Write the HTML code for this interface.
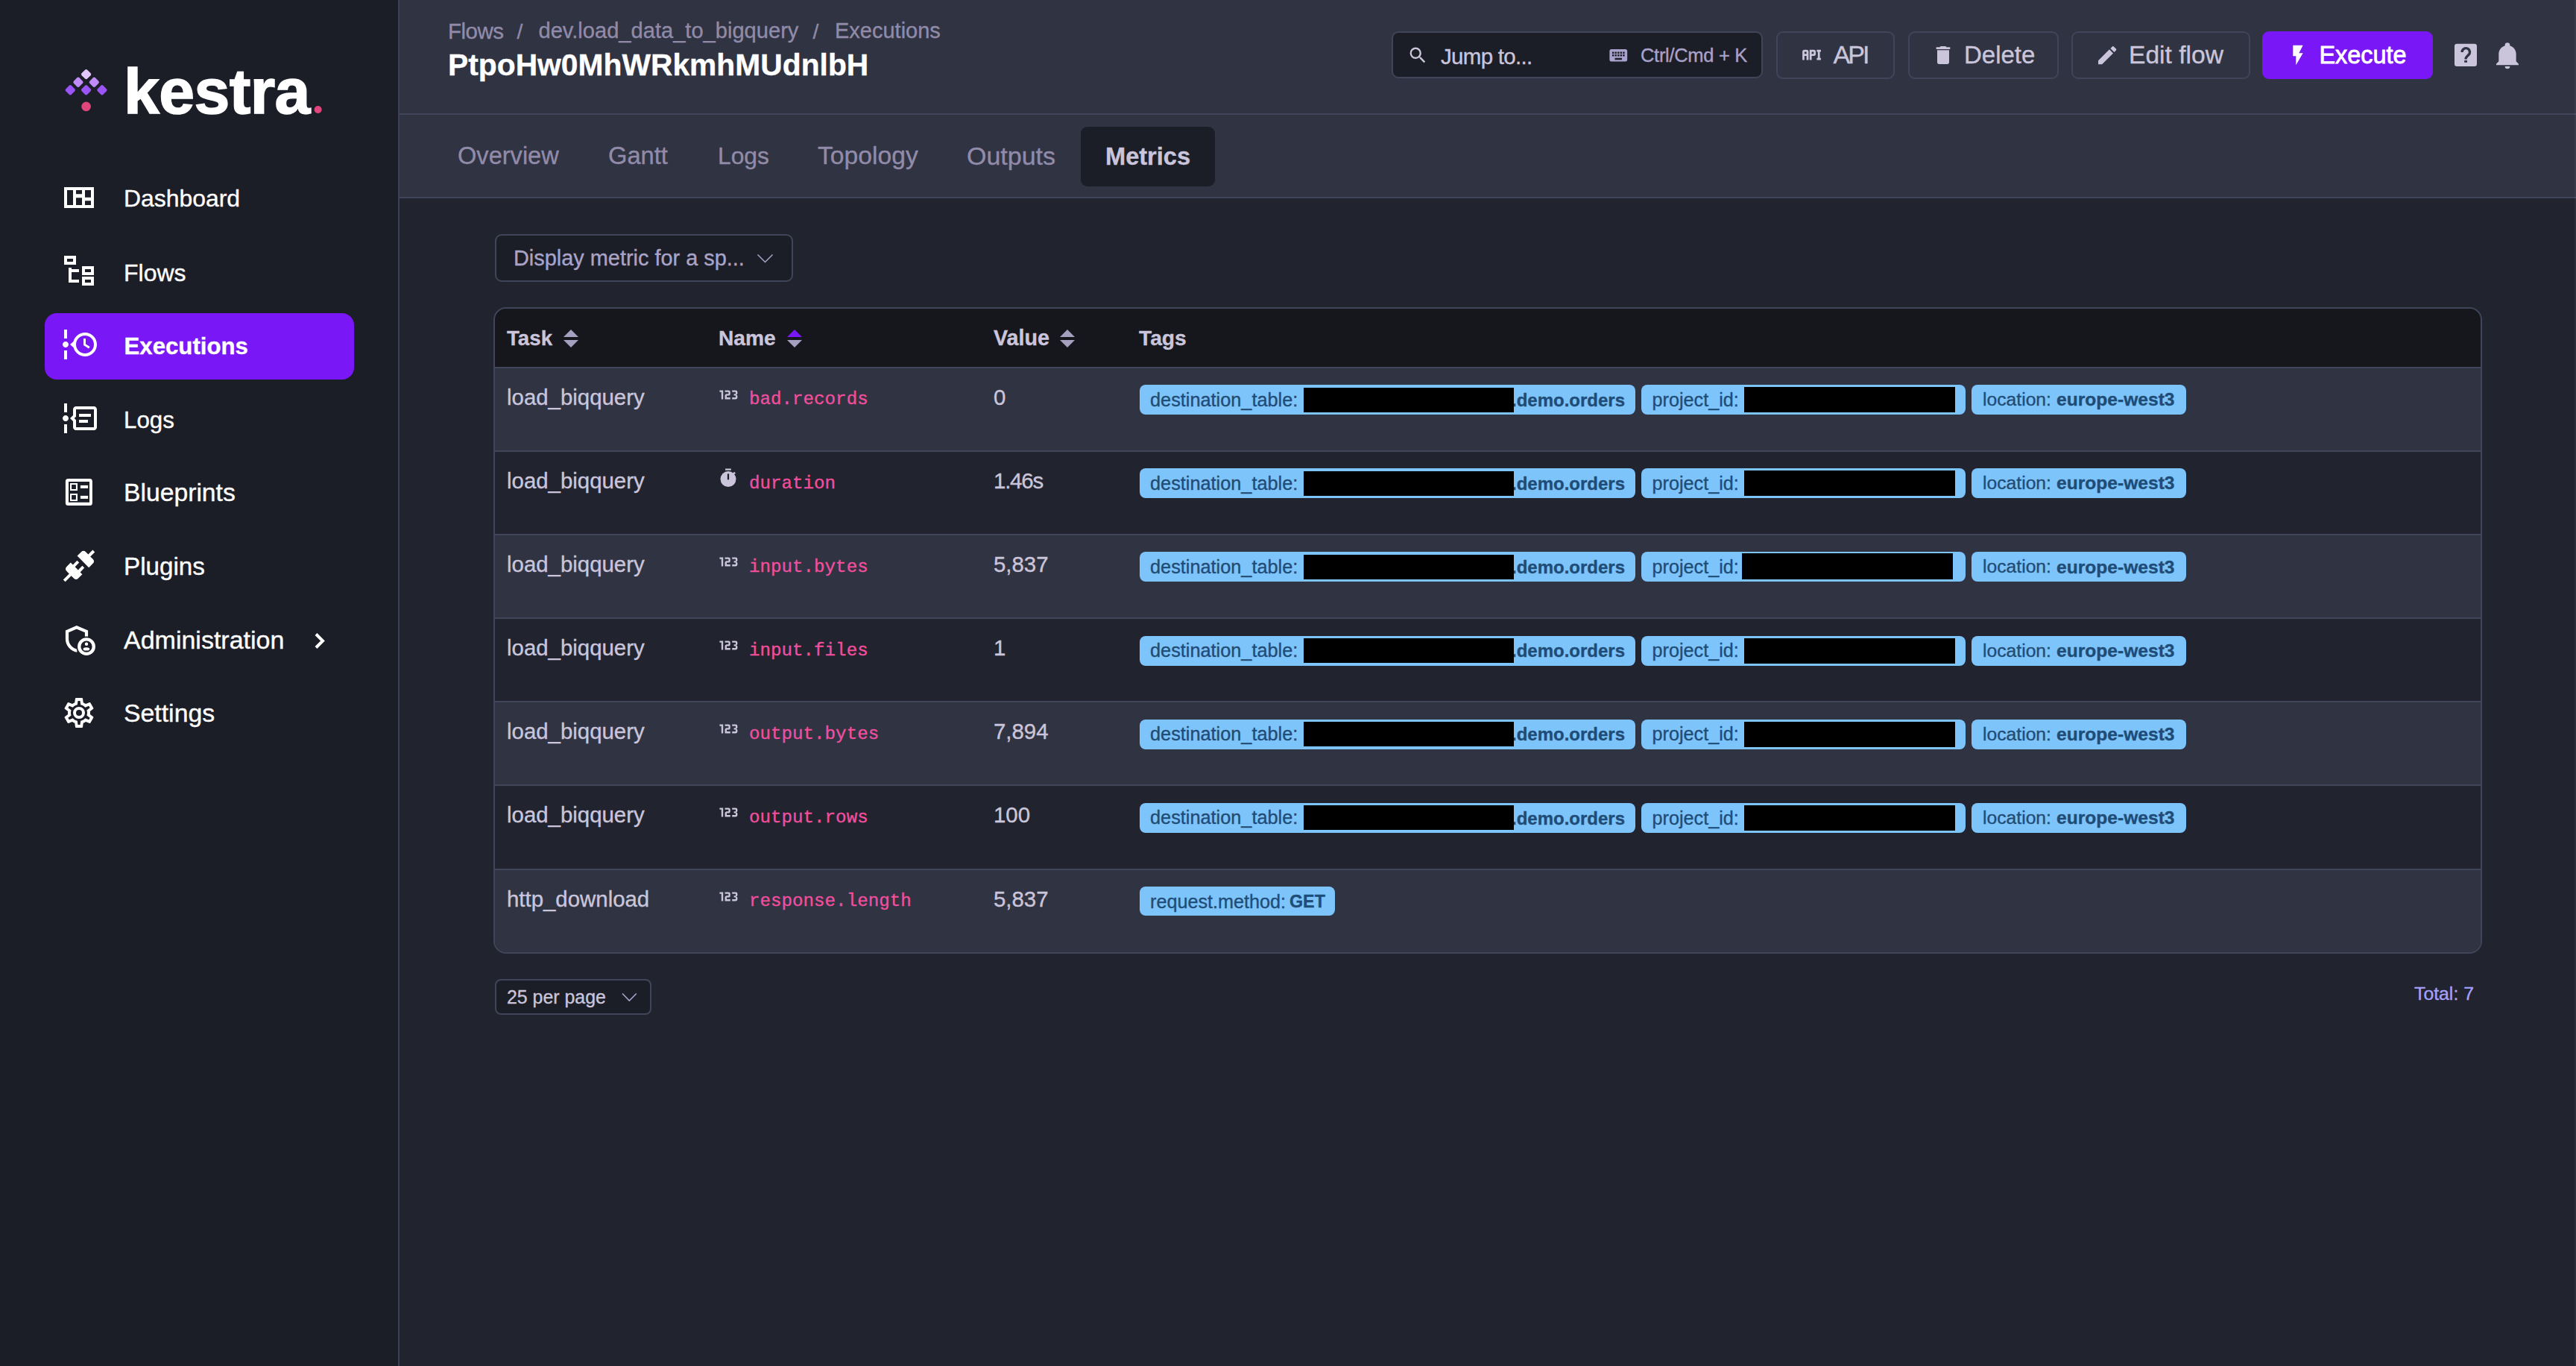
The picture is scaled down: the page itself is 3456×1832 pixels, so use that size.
<!DOCTYPE html>
<html><head><meta charset="utf-8">
<style>
*{box-sizing:border-box;margin:0;padding:0}
html,body{width:3456px;height:1832px;overflow:hidden;background:#21242E;font-family:"Liberation Sans",sans-serif;position:relative}
.a{position:absolute;white-space:pre;line-height:1;-webkit-text-stroke:0.35px currentColor}
.mono{font-family:"Liberation Mono",monospace}
@media (max-width:2000px){html{zoom:0.5}}
</style></head><body>
<div style="position:absolute;left:0px;top:0px;width:534px;height:1832px;background:#1C1E27"></div>
<div style="position:absolute;left:534px;top:0px;width:2px;height:1832px;background:#3C4153"></div>
<div style="position:absolute;left:536px;top:0px;width:2920px;height:264px;background:#2F3342"></div>
<div style="position:absolute;left:536px;top:152px;width:2920px;height:2px;background:#404559"></div>
<div style="position:absolute;left:536px;top:264px;width:2920px;height:2px;background:#404559"></div>
<svg style="position:absolute;left:0px;top:0px;" width="540" height="200" viewBox="0 0 540 200"><rect x="110.3" y="94.3" width="10.6" height="10.6" rx="2.2" fill="#E3C6FF" transform="rotate(45 115.6 99.6)"/><rect x="99.60000000000001" y="105.0" width="10.6" height="10.6" rx="2.2" fill="#C08CF8" transform="rotate(45 104.9 110.3)"/><rect x="121.0" y="105.0" width="10.6" height="10.6" rx="2.2" fill="#C08CF8" transform="rotate(45 126.3 110.3)"/><rect x="89.0" y="115.5" width="10.6" height="10.6" rx="2.2" fill="#9B55F7" transform="rotate(45 94.3 120.8)"/><rect x="110.3" y="115.5" width="10.6" height="10.6" rx="2.2" fill="#9B55F7" transform="rotate(45 115.6 120.8)"/><rect x="131.6" y="115.5" width="10.6" height="10.6" rx="2.2" fill="#9B55F7" transform="rotate(45 136.9 120.8)"/><circle cx="115.6" cy="142.9" r="6.3" fill="#E0457B"/><circle cx="426.6" cy="147" r="5" fill="#E0457B"/></svg>
<div class="a " style="left:166px;top:79.20px;font-size:86px;color:#fff;font-weight:700;letter-spacing:-0.6px;-webkit-text-stroke:1.6px #fff">kestra</div>
<div style="position:absolute;left:60px;top:420px;width:415px;height:89px;background:#7A17F6;border-radius:16px"></div>
<div class="a " style="left:166px;top:251.40px;font-size:31.9px;color:#fff">Dashboard</div>
<div class="a " style="left:166px;top:349.91px;font-size:32px;color:#fff">Flows</div>
<div class="a " style="left:166.5px;top:449.19px;font-size:31.2px;color:#fff;font-weight:700">Executions</div>
<div class="a " style="left:166px;top:547.70px;font-size:31.3px;color:#fff">Logs</div>
<div class="a " style="left:166px;top:644.27px;font-size:33.7px;color:#fff">Blueprints</div>
<div class="a " style="left:166px;top:743.30px;font-size:33.2px;color:#fff">Plugins</div>
<div class="a " style="left:166px;top:841.22px;font-size:34px;color:#fff">Administration</div>
<div class="a " style="left:166px;top:939.99px;font-size:33.8px;color:#fff">Settings</div>
<svg style="position:absolute;left:0px;top:0px;" width="540" height="1000" viewBox="0 0 540 1000"><path fill-rule="evenodd" fill="#fff" d="M86 251H126V279H86ZM90 255H98V275H90Z M102 255H110V260.2H102Z M102 265.2H110V275H102ZM114 255H122V264.7H114Z M114 269.3H122V275H114Z"/></svg>
<svg style="position:absolute;left:81.8px;top:338.7px" width="48.00" height="48.00" viewBox="0 0 24 24"><path fill="#fff" d="M12 13H7V18H12V20H5V10H7V11H12V13M8 4V6H4V4H8M10 2H2V8H10V2M20 11V13H16V11H20M22 9H14V15H22V9M20 18V20H16V18H20M22 16H14V22H22V16Z" /></svg>
<svg style="position:absolute;left:81.9px;top:438px" width="48.00" height="48.00" viewBox="0 0 24 24"><path fill="#fff" d="M4 2V8H2V2H4M2 22V16H4V22H2M5 12C5 13.11 4.11 14 3 14C1.9 14 1 13.11 1 12C1 10.9 1.9 10 3 10C4.11 10 5 10.9 5 12M16 4C20.42 4 24 7.58 24 12C24 16.42 20.42 20 16 20C12.28 20 9.15 17.46 8.26 14L6 12L8.26 10C9.15 6.54 12.28 4 16 4M16 6C12.69 6 10 8.69 10 12C10 15.31 12.69 18 16 18C19.31 18 22 15.31 22 12C22 8.69 19.31 6 16 6M15 8H16.5V11.75L19.33 13.5L18.5 14.69L15 12.5V8Z" /></svg>
<svg style="position:absolute;left:81.9px;top:536.8px" width="48.00" height="48.00" viewBox="0 0 24 24"><path fill="#fff" d="M4 2V8H2V2H4M2 22V16H4V22H2M5 12C5 13.11 4.11 14 3 14C1.9 14 1 13.11 1 12C1 10.9 1.9 10 3 10C4.11 10 5 10.9 5 12M24 6V18C24 19.11 23.11 20 22 20H10C8.9 20 8 19.11 8 18V14L6 12L8 10V6C8 4.89 8.9 4 10 4H22C23.11 4 24 4.89 24 6M22 6H10V10.83L8.83 12L10 13.17V18H22V6M12 9H20V11H12V9M12 13H18V15H12V13Z" /></svg>
<svg style="position:absolute;left:0px;top:0px;" width="540" height="1000" viewBox="0 0 540 1000"><path fill-rule="evenodd" fill="#fff" d="M91.4 641.9H120.4A3.5 3.5 0 0 1 123.9 645.4V674.5A3.5 3.5 0 0 1 120.4 678H91.4A3.5 3.5 0 0 1 87.9 674.5V645.4A3.5 3.5 0 0 1 91.4 641.9ZM92 646H120V673.8H92Z"/><path fill-rule="evenodd" fill="#fff" d="M94 648H104V658H94Z M96.1 650.1H101.9V655.9H96.1Z"/><path fill-rule="evenodd" fill="#fff" d="M94 662H104V672H94Z M96.1 664.1H101.9V669.9H96.1Z"/><rect x="107.9" y="650.9" width="10.2" height="4" fill="#fff"/><rect x="107.9" y="664.9" width="10.2" height="4" fill="#fff"/></svg>
<svg style="position:absolute;left:81.6px;top:735px" width="48.00" height="48.00" viewBox="0 0 24 24"><path fill="#fff" d="M21.4 7.5C22.2 8.3 22.2 9.6 21.4 10.3L18.6 13.1L10.8 5.3L13.6 2.5C14.4 1.7 15.7 1.7 16.4 2.5L18.2 4.3L21.2 1.3L22.6 2.7L19.6 5.7L21.4 7.5M15.6 13.3L14.2 11.9L11.4 14.7L9.3 12.6L12.1 9.8L10.7 8.4L7.9 11.2L6.4 9.8L3.6 12.6C2.8 13.4 2.8 14.7 3.6 15.4L5.4 17.2L1.4 21.2L2.8 22.6L6.8 18.6L8.6 20.4C9.4 21.2 10.7 21.2 11.4 20.4L14.2 17.6L12.8 16.2L15.6 13.3Z" /></svg>
<svg style="position:absolute;left:0px;top:0px;" width="540" height="1000" viewBox="0 0 540 1000"><path d="M103.6 872.7C95.5 871 90 864.5 90 857V846.8L102.8 841.3L116 846.8V857" fill="none" stroke="#fff" stroke-width="4.2" stroke-linejoin="miter"/><circle cx="116" cy="867.2" r="13.6" fill="#1C1E27"/><circle cx="116" cy="867.2" r="9.75" fill="none" stroke="#fff" stroke-width="4.3"/><circle cx="116" cy="863.8" r="2.2" fill="#fff"/><ellipse cx="115.9" cy="870.4" rx="4.3" ry="2.2" fill="#fff"/></svg>
<svg style="position:absolute;left:81.9px;top:931.9px" width="48.00" height="48.00" viewBox="0 0 24 24"><path fill="#fff" d="M12,8A4,4 0 0,1 16,12A4,4 0 0,1 12,16A4,4 0 0,1 8,12A4,4 0 0,1 12,8M12,10A2,2 0 0,0 10,12A2,2 0 0,0 12,14A2,2 0 0,0 14,12A2,2 0 0,0 12,10M10,22C9.75,22 9.54,21.82 9.5,21.58L9.13,18.93C8.5,18.68 7.96,18.34 7.44,17.94L4.95,18.95C4.73,19.03 4.46,18.95 4.34,18.73L2.34,15.27C2.21,15.05 2.27,14.78 2.46,14.63L4.57,12.97L4.5,12L4.57,11L2.46,9.37C2.27,9.22 2.21,8.95 2.34,8.73L4.34,5.27C4.46,5.05 4.73,4.96 4.95,5.05L7.44,6.05C7.96,5.66 8.5,5.32 9.13,5.07L9.5,2.42C9.54,2.18 9.75,2 10,2H14C14.25,2 14.46,2.18 14.5,2.42L14.87,5.07C15.5,5.32 16.04,5.66 16.56,6.05L19.05,5.05C19.27,4.96 19.54,5.05 19.66,5.27L21.66,8.73C21.79,8.95 21.73,9.22 21.54,9.37L19.43,11L19.5,12L19.43,13L21.54,14.63C21.73,14.78 21.79,15.05 21.66,15.27L19.66,18.73C19.54,18.95 19.27,19.04 19.05,18.95L16.56,17.95C16.04,18.34 15.5,18.68 14.87,18.93L14.5,21.58C14.46,21.82 14.25,22 14,22H10M11.25,4L10.88,6.61C9.68,6.86 8.62,7.5 7.85,8.39L5.44,7.35L4.69,8.65L6.8,10.2C6.4,11.37 6.4,12.64 6.8,13.8L4.68,15.36L5.43,16.66L7.86,15.62C8.63,16.5 9.68,17.14 10.87,17.38L11.24,20H12.76L13.13,17.39C14.32,17.14 15.37,16.5 16.14,15.62L18.57,16.66L19.32,15.36L17.2,13.81C17.6,12.64 17.6,11.37 17.2,10.2L19.31,8.65L18.56,7.35L16.15,8.39C15.38,7.5 14.32,6.86 13.12,6.62L12.75,4H11.25Z" /></svg>
<svg style="position:absolute;left:415px;top:840px;" width="30" height="40" viewBox="0 0 30 40"><path d="M9 10.5L18 19.5L9 28.5" fill="none" stroke="#fff" stroke-width="4" stroke-linecap="butt" stroke-linejoin="miter"/></svg>
<div class="a " style="left:601px;top:27.03px;font-size:29.5px;color:#918BA9;letter-spacing:-0.5px">Flows</div>
<div class="a " style="left:693.5px;top:28.04px;font-size:28.3px;color:#918BA9">/</div>
<div class="a " style="left:722.5px;top:27.37px;font-size:29.1px;color:#918BA9">dev.load_data_to_bigquery</div>
<div class="a " style="left:1090.5px;top:28.04px;font-size:28.3px;color:#918BA9">/</div>
<div class="a " style="left:1120px;top:27.45px;font-size:29px;color:#918BA9">Executions</div>
<div class="a " style="left:601px;top:67.46px;font-size:40.8px;color:#fff;font-weight:700">PtpoHw0MhWRkmhMUdnlbH</div>
<div style="position:absolute;left:1450px;top:170px;width:180px;height:80px;background:#1C1E27;border-radius:9px"></div>
<div class="a " style="left:614px;top:193.40px;font-size:32.6px;color:#918BA9">Overview</div>
<div class="a " style="left:816px;top:193.32px;font-size:32.7px;color:#918BA9">Gantt</div>
<div class="a " style="left:963px;top:194.08px;font-size:31.8px;color:#918BA9">Logs</div>
<div class="a " style="left:1097px;top:192.47px;font-size:33.7px;color:#918BA9">Topology</div>
<div class="a " style="left:1297px;top:192.22px;font-size:34px;color:#918BA9">Outputs</div>
<div class="a " style="left:1483px;top:193.90px;font-size:32.6px;color:#CAC5DA;font-weight:700">Metrics</div>
<div style="position:absolute;left:1866.5px;top:42px;width:498.5px;height:63px;background:#1C1E27;border:2px solid #404559;border-radius:9px"></div>
<svg style="position:absolute;left:1887.8px;top:59.8px" width="28.32" height="28.32" viewBox="0 0 24 24"><path fill="#CAC5DA" d="M9.5,3A6.5,6.5 0 0,1 16,9.5C16,11.11 15.41,12.59 14.44,13.73L14.71,14H15.5L20.5,19L19,20.5L14,15.5V14.71L13.73,14.44C12.59,15.41 11.11,16 9.5,16A6.5,6.5 0 0,1 3,9.5A6.5,6.5 0 0,1 9.5,3M9.5,5C7,5 5,7 5,9.5C5,12 7,14 9.5,14C12,14 14,12 14,9.5C14,7 12,5 9.5,5Z" /></svg>
<div class="a " style="left:1933px;top:60.53px;font-size:29.5px;color:#CAC5DA;letter-spacing:-0.7px">Jump to...</div>
<svg style="position:absolute;left:2156.8px;top:59.75px" width="28.56" height="28.56" viewBox="0 0 24 24"><path fill="#A9A2CC" d="M19,10H17V8H19M19,13H17V11H19M16,10H14V8H16M16,13H14V11H16M16,17H8V15H16M7,10H5V8H7M7,13H5V11H7M8,11H10V13H8M8,8H10V10H8M11,11H13V13H11M11,8H13V10H11M20,5H4C2.89,5 2,5.89 2,7V17A2,2 0 0,0 4,19H20A2,2 0 0,0 22,17V7C22,5.89 21.1,5 20,5Z" /></svg>
<div class="a " style="left:2201px;top:61.71px;font-size:25.5px;color:#A9A2CC;letter-spacing:-0.3px">Ctrl/Cmd + K</div>
<div style="position:absolute;left:2383px;top:42px;width:159px;height:64px;border-radius:9px;border:2px solid #404559;"></div>
<svg style="position:absolute;left:2413.7px;top:57.3px" width="33.12" height="33.12" viewBox="0 0 24 24"><path fill="#CAC5DA" d="M7 7H5A2 2 0 0 0 3 9V17H5V13H7V17H9V9A2 2 0 0 0 7 7M7 11H5V9H7M14 7H10V17H12V13H14A2 2 0 0 0 16 11V9A2 2 0 0 0 14 7M14 11H12V9H14M20 9V15H21V17H17V15H18V9H17V7H21V9Z" /></svg>
<div class="a " style="left:2459.5px;top:56.22px;font-size:34px;color:#CAC5DA;letter-spacing:-2.9px">API</div>
<div style="position:absolute;left:2559.5px;top:42px;width:202.5px;height:64px;border-radius:9px;border:2px solid #404559;"></div>
<svg style="position:absolute;left:2591px;top:57.7px" width="31.99" height="31.99" viewBox="0 0 24 24"><path fill="#CAC5DA" d="M19,4H15.5L14.5,3H9.5L8.5,4H5V6H19M6,19A2,2 0 0,0 8,21H16A2,2 0 0,0 18,19V7H6V19Z" /></svg>
<div class="a " style="left:2635px;top:57.07px;font-size:33px;color:#CAC5DA">Delete</div>
<div style="position:absolute;left:2779px;top:42px;width:239.5px;height:64px;border-radius:9px;border:2px solid #404559;"></div>
<svg style="position:absolute;left:2810.85px;top:57.8px" width="32.40" height="32.40" viewBox="0 0 24 24"><path fill="#CAC5DA" d="M20.71,7.04C21.1,6.65 21.1,6 20.71,5.63L18.37,3.29C18,2.9 17.35,2.9 16.96,3.29L15.12,5.12L18.87,8.87M3,17.25V21H6.75L17.81,9.93L14.06,6.18L3,17.25Z" /></svg>
<div class="a " style="left:2856px;top:56.56px;font-size:33.6px;color:#CAC5DA">Edit flow</div>
<div style="position:absolute;left:3035px;top:42px;width:229px;height:64px;border-radius:9px;background:#7A17F6;"></div>
<svg style="position:absolute;left:3066.6px;top:57.7px" width="31.99" height="31.99" viewBox="0 0 24 24"><path fill="#fff" d="M7,2V13H10V22L17,10H13L17,2H7Z" /></svg>
<div class="a " style="left:3111.5px;top:57.57px;font-size:32.4px;color:#fff;-webkit-text-stroke:0.8px #fff">Execute</div>
<svg style="position:absolute;left:3280px;top:45px;" width="60" height="60" viewBox="0 0 60 60"><rect x="13" y="13.8" width="30" height="30.1" rx="3.2" fill="#CAC5DA"/><path d="M23.1 25A5.2 5.2 0 1 1 31.9 28.6L29.6 30.9Q28.1 32.4 28.1 34V34.6" fill="none" stroke="#2F3342" stroke-width="3.4"/><rect x="26.2" y="36" width="3.8" height="2.8" fill="#2F3342"/></svg>
<svg style="position:absolute;left:3343.7px;top:53.5px" width="40.01" height="40.01" viewBox="0 0 24 24"><path fill="#CAC5DA" d="M21,19V20H3V19L5,17V11C5,7.9 7.03,5.17 10,4.29C10,4.19 10,4.1 10,4A2,2 0 0,1 12,2A2,2 0 0,1 14,4C14,4.1 14,4.19 14,4.29C16.97,5.17 19,7.9 19,11V17L21,19M14,21A2,2 0 0,1 12,23A2,2 0 0,1 10,21" /></svg>
<div style="position:absolute;left:664px;top:314px;width:400px;height:64px;background:#1C1E27;border:2px solid #404559;border-radius:9px"></div>
<div class="a " style="left:689px;top:331.54px;font-size:28.9px;color:#AAA3C8">Display metric for a sp...</div>
<svg style="position:absolute;left:1010px;top:335px;" width="34" height="24" viewBox="0 0 34 24"><path d="M6.5 6.5L16.5 16.5L26.5 6.5" fill="none" stroke="#AAA3C8" stroke-width="1.5"/></svg>
<div style="position:absolute;left:662px;top:412px;width:2668px;height:867px;background:#21242E;border:2px solid #404559;border-radius:17px;overflow:hidden"></div>
<div style="position:absolute;left:664px;top:414px;width:2664px;height:78px;background:#16171D;border-radius:15px 15px 0 0"></div>
<div style="position:absolute;left:664px;top:491.5px;width:2664px;height:2px;background:#404559"></div>
<div style="position:absolute;left:664px;top:493.5px;width:2664px;height:110.17px;background:#2F3342;"></div>
<div class="a " style="left:680px;top:517.61px;font-size:29.4px;color:#CAC5DA">load_biqquery</div>
<svg style="position:absolute;left:962.5px;top:514.5px" width="28.80" height="28.80" viewBox="0 0 24 24"><path fill="#CAC5DA" d="M4,17V9H2V7H6V17H4M22,15C22,16.11 21.1,17 20,17H16V15H20V13H18V11H20V9H16V7H20A2,2 0 0,1 22,9V10.5A1.5,1.5 0 0,1 20.5,12A1.5,1.5 0 0,1 22,13.5V15M14,15V17H8V13C8,11.89 8.9,11 10,11H12V9H8V7H12A2,2 0 0,1 14,9V11C14,12.11 13.1,13 12,13H10V15H14Z" /></svg>
<div class="a mono" style="left:1005px;top:524.41px;font-size:24.2px;color:#F04F9E">bad.records</div>
<div class="a " style="left:1333px;top:517.61px;font-size:29.4px;color:#CAC5DA">0</div>
<div style="position:absolute;left:1529px;top:516.0px;width:664.5px;height:40px;background:#7DC4FA;border-radius:8px"></div>
<div class="a " style="left:1543px;top:523.58px;font-size:25.3px;color:#1F4C77">destination_table:</div>
<div class="a " style="left:2028px;top:524.68px;font-size:24px;color:#1F4C77;font-weight:700">.demo.orders</div>
<div style="position:absolute;left:1748.5px;top:519.5px;width:282px;height:33px;background:#000"></div>
<div style="position:absolute;left:2202px;top:516.0px;width:434.5px;height:40px;background:#7DC4FA;border-radius:8px"></div>
<div class="a " style="left:2216.6px;top:523.67px;font-size:25.2px;color:#1F4C77">project_id:</div>
<div style="position:absolute;left:2339.5px;top:519.0px;width:283px;height:34px;background:#000"></div>
<div style="position:absolute;left:2645px;top:516.0px;width:287.5px;height:40px;background:#7DC4FA;border-radius:8px"></div>
<div class="a " style="left:2660px;top:524.09px;font-size:24.7px;color:#1F4C77">location:</div>
<div class="a " style="left:2759px;top:524.18px;font-size:24.6px;color:#1F4C77;font-weight:700">europe-west3</div>
<div style="position:absolute;left:664px;top:603.67px;width:2664px;height:2px;background:#404559"></div>
<div style="position:absolute;left:664px;top:605.67px;width:2664px;height:110.17px;background:#21242E;"></div>
<div class="a " style="left:680px;top:629.78px;font-size:29.4px;color:#CAC5DA">load_biqquery</div>
<svg style="position:absolute;left:960px;top:623.67px;" width="40" height="40" viewBox="0 0 40 40"><rect x="13.1" y="4.5" width="7.7" height="2.2" fill="#CAC5DA"/><circle cx="17" cy="18.6" r="10.5" fill="#CAC5DA"/><path d="M23.2 12.4L26 9.6" stroke="#CAC5DA" stroke-width="2.6"/><rect x="15.9" y="11.4" width="2.2" height="7.9" fill="#1C1E27"/></svg>
<div class="a mono" style="left:1005px;top:636.58px;font-size:24.2px;color:#F04F9E">duration</div>
<div class="a " style="left:1333px;top:629.78px;font-size:29.4px;color:#CAC5DA;letter-spacing:-1.2px">1.46s</div>
<div style="position:absolute;left:1529px;top:628.17px;width:664.5px;height:40px;background:#7DC4FA;border-radius:8px"></div>
<div class="a " style="left:1543px;top:635.75px;font-size:25.3px;color:#1F4C77">destination_table:</div>
<div class="a " style="left:2028px;top:636.85px;font-size:24px;color:#1F4C77;font-weight:700">.demo.orders</div>
<div style="position:absolute;left:1748.5px;top:631.67px;width:282px;height:33px;background:#000"></div>
<div style="position:absolute;left:2202px;top:628.17px;width:434.5px;height:40px;background:#7DC4FA;border-radius:8px"></div>
<div class="a " style="left:2216.6px;top:635.84px;font-size:25.2px;color:#1F4C77">project_id:</div>
<div style="position:absolute;left:2339.5px;top:631.17px;width:283px;height:34px;background:#000"></div>
<div style="position:absolute;left:2645px;top:628.17px;width:287.5px;height:40px;background:#7DC4FA;border-radius:8px"></div>
<div class="a " style="left:2660px;top:636.26px;font-size:24.7px;color:#1F4C77">location:</div>
<div class="a " style="left:2759px;top:636.35px;font-size:24.6px;color:#1F4C77;font-weight:700">europe-west3</div>
<div style="position:absolute;left:664px;top:715.84px;width:2664px;height:2px;background:#404559"></div>
<div style="position:absolute;left:664px;top:717.84px;width:2664px;height:110.17px;background:#2F3342;"></div>
<div class="a " style="left:680px;top:741.95px;font-size:29.4px;color:#CAC5DA">load_biqquery</div>
<svg style="position:absolute;left:962.5px;top:738.84px" width="28.80" height="28.80" viewBox="0 0 24 24"><path fill="#CAC5DA" d="M4,17V9H2V7H6V17H4M22,15C22,16.11 21.1,17 20,17H16V15H20V13H18V11H20V9H16V7H20A2,2 0 0,1 22,9V10.5A1.5,1.5 0 0,1 20.5,12A1.5,1.5 0 0,1 22,13.5V15M14,15V17H8V13C8,11.89 8.9,11 10,11H12V9H8V7H12A2,2 0 0,1 14,9V11C14,12.11 13.1,13 12,13H10V15H14Z" /></svg>
<div class="a mono" style="left:1005px;top:748.75px;font-size:24.2px;color:#F04F9E">input.bytes</div>
<div class="a " style="left:1333px;top:741.95px;font-size:29.4px;color:#CAC5DA">5,837</div>
<div style="position:absolute;left:1529px;top:740.34px;width:664.5px;height:40px;background:#7DC4FA;border-radius:8px"></div>
<div class="a " style="left:1543px;top:747.92px;font-size:25.3px;color:#1F4C77">destination_table:</div>
<div class="a " style="left:2028px;top:749.02px;font-size:24px;color:#1F4C77;font-weight:700">.demo.orders</div>
<div style="position:absolute;left:1748.5px;top:743.84px;width:282px;height:33px;background:#000"></div>
<div style="position:absolute;left:2202px;top:740.34px;width:434.5px;height:40px;background:#7DC4FA;border-radius:8px"></div>
<div class="a " style="left:2216.6px;top:748.01px;font-size:25.2px;color:#1F4C77">project_id:</div>
<div style="position:absolute;left:2337px;top:741.84px;width:283px;height:35px;background:#000"></div>
<div style="position:absolute;left:2645px;top:740.34px;width:287.5px;height:40px;background:#7DC4FA;border-radius:8px"></div>
<div class="a " style="left:2660px;top:748.43px;font-size:24.7px;color:#1F4C77">location:</div>
<div class="a " style="left:2759px;top:748.52px;font-size:24.6px;color:#1F4C77;font-weight:700">europe-west3</div>
<div style="position:absolute;left:664px;top:828.01px;width:2664px;height:2px;background:#404559"></div>
<div style="position:absolute;left:664px;top:830.01px;width:2664px;height:110.17px;background:#21242E;"></div>
<div class="a " style="left:680px;top:854.12px;font-size:29.4px;color:#CAC5DA">load_biqquery</div>
<svg style="position:absolute;left:962.5px;top:851.01px" width="28.80" height="28.80" viewBox="0 0 24 24"><path fill="#CAC5DA" d="M4,17V9H2V7H6V17H4M22,15C22,16.11 21.1,17 20,17H16V15H20V13H18V11H20V9H16V7H20A2,2 0 0,1 22,9V10.5A1.5,1.5 0 0,1 20.5,12A1.5,1.5 0 0,1 22,13.5V15M14,15V17H8V13C8,11.89 8.9,11 10,11H12V9H8V7H12A2,2 0 0,1 14,9V11C14,12.11 13.1,13 12,13H10V15H14Z" /></svg>
<div class="a mono" style="left:1005px;top:860.92px;font-size:24.2px;color:#F04F9E">input.files</div>
<div class="a " style="left:1333px;top:854.12px;font-size:29.4px;color:#CAC5DA">1</div>
<div style="position:absolute;left:1529px;top:852.51px;width:664.5px;height:40px;background:#7DC4FA;border-radius:8px"></div>
<div class="a " style="left:1543px;top:860.09px;font-size:25.3px;color:#1F4C77">destination_table:</div>
<div class="a " style="left:2028px;top:861.19px;font-size:24px;color:#1F4C77;font-weight:700">.demo.orders</div>
<div style="position:absolute;left:1748.5px;top:856.01px;width:282px;height:33px;background:#000"></div>
<div style="position:absolute;left:2202px;top:852.51px;width:434.5px;height:40px;background:#7DC4FA;border-radius:8px"></div>
<div class="a " style="left:2216.6px;top:860.18px;font-size:25.2px;color:#1F4C77">project_id:</div>
<div style="position:absolute;left:2339.5px;top:855.51px;width:283px;height:34px;background:#000"></div>
<div style="position:absolute;left:2645px;top:852.51px;width:287.5px;height:40px;background:#7DC4FA;border-radius:8px"></div>
<div class="a " style="left:2660px;top:860.60px;font-size:24.7px;color:#1F4C77">location:</div>
<div class="a " style="left:2759px;top:860.69px;font-size:24.6px;color:#1F4C77;font-weight:700">europe-west3</div>
<div style="position:absolute;left:664px;top:940.1800000000001px;width:2664px;height:2px;background:#404559"></div>
<div style="position:absolute;left:664px;top:942.1800000000001px;width:2664px;height:110.17px;background:#2F3342;"></div>
<div class="a " style="left:680px;top:966.29px;font-size:29.4px;color:#CAC5DA">load_biqquery</div>
<svg style="position:absolute;left:962.5px;top:963.1800000000001px" width="28.80" height="28.80" viewBox="0 0 24 24"><path fill="#CAC5DA" d="M4,17V9H2V7H6V17H4M22,15C22,16.11 21.1,17 20,17H16V15H20V13H18V11H20V9H16V7H20A2,2 0 0,1 22,9V10.5A1.5,1.5 0 0,1 20.5,12A1.5,1.5 0 0,1 22,13.5V15M14,15V17H8V13C8,11.89 8.9,11 10,11H12V9H8V7H12A2,2 0 0,1 14,9V11C14,12.11 13.1,13 12,13H10V15H14Z" /></svg>
<div class="a mono" style="left:1005px;top:973.09px;font-size:24.2px;color:#F04F9E">output.bytes</div>
<div class="a " style="left:1333px;top:966.29px;font-size:29.4px;color:#CAC5DA">7,894</div>
<div style="position:absolute;left:1529px;top:964.6800000000001px;width:664.5px;height:40px;background:#7DC4FA;border-radius:8px"></div>
<div class="a " style="left:1543px;top:972.26px;font-size:25.3px;color:#1F4C77">destination_table:</div>
<div class="a " style="left:2028px;top:973.36px;font-size:24px;color:#1F4C77;font-weight:700">.demo.orders</div>
<div style="position:absolute;left:1748.5px;top:968.1800000000001px;width:282px;height:33px;background:#000"></div>
<div style="position:absolute;left:2202px;top:964.6800000000001px;width:434.5px;height:40px;background:#7DC4FA;border-radius:8px"></div>
<div class="a " style="left:2216.6px;top:972.35px;font-size:25.2px;color:#1F4C77">project_id:</div>
<div style="position:absolute;left:2339.5px;top:967.6800000000001px;width:283px;height:34px;background:#000"></div>
<div style="position:absolute;left:2645px;top:964.6800000000001px;width:287.5px;height:40px;background:#7DC4FA;border-radius:8px"></div>
<div class="a " style="left:2660px;top:972.77px;font-size:24.7px;color:#1F4C77">location:</div>
<div class="a " style="left:2759px;top:972.86px;font-size:24.6px;color:#1F4C77;font-weight:700">europe-west3</div>
<div style="position:absolute;left:664px;top:1052.35px;width:2664px;height:2px;background:#404559"></div>
<div style="position:absolute;left:664px;top:1054.35px;width:2664px;height:110.17px;background:#21242E;"></div>
<div class="a " style="left:680px;top:1078.46px;font-size:29.4px;color:#CAC5DA">load_biqquery</div>
<svg style="position:absolute;left:962.5px;top:1075.35px" width="28.80" height="28.80" viewBox="0 0 24 24"><path fill="#CAC5DA" d="M4,17V9H2V7H6V17H4M22,15C22,16.11 21.1,17 20,17H16V15H20V13H18V11H20V9H16V7H20A2,2 0 0,1 22,9V10.5A1.5,1.5 0 0,1 20.5,12A1.5,1.5 0 0,1 22,13.5V15M14,15V17H8V13C8,11.89 8.9,11 10,11H12V9H8V7H12A2,2 0 0,1 14,9V11C14,12.11 13.1,13 12,13H10V15H14Z" /></svg>
<div class="a mono" style="left:1005px;top:1085.26px;font-size:24.2px;color:#F04F9E">output.rows</div>
<div class="a " style="left:1333px;top:1078.46px;font-size:29.4px;color:#CAC5DA">100</div>
<div style="position:absolute;left:1529px;top:1076.85px;width:664.5px;height:40px;background:#7DC4FA;border-radius:8px"></div>
<div class="a " style="left:1543px;top:1084.43px;font-size:25.3px;color:#1F4C77">destination_table:</div>
<div class="a " style="left:2028px;top:1085.53px;font-size:24px;color:#1F4C77;font-weight:700">.demo.orders</div>
<div style="position:absolute;left:1748.5px;top:1080.35px;width:282px;height:33px;background:#000"></div>
<div style="position:absolute;left:2202px;top:1076.85px;width:434.5px;height:40px;background:#7DC4FA;border-radius:8px"></div>
<div class="a " style="left:2216.6px;top:1084.52px;font-size:25.2px;color:#1F4C77">project_id:</div>
<div style="position:absolute;left:2339.5px;top:1079.85px;width:283px;height:34px;background:#000"></div>
<div style="position:absolute;left:2645px;top:1076.85px;width:287.5px;height:40px;background:#7DC4FA;border-radius:8px"></div>
<div class="a " style="left:2660px;top:1084.94px;font-size:24.7px;color:#1F4C77">location:</div>
<div class="a " style="left:2759px;top:1085.03px;font-size:24.6px;color:#1F4C77;font-weight:700">europe-west3</div>
<div style="position:absolute;left:664px;top:1164.52px;width:2664px;height:2px;background:#404559"></div>
<div style="position:absolute;left:664px;top:1166.52px;width:2664px;height:110.48000000000002px;background:#2F3342;border-radius:0 0 15px 15px;"></div>
<div class="a " style="left:680px;top:1190.63px;font-size:29.4px;color:#CAC5DA">http_download</div>
<svg style="position:absolute;left:962.5px;top:1187.52px" width="28.80" height="28.80" viewBox="0 0 24 24"><path fill="#CAC5DA" d="M4,17V9H2V7H6V17H4M22,15C22,16.11 21.1,17 20,17H16V15H20V13H18V11H20V9H16V7H20A2,2 0 0,1 22,9V10.5A1.5,1.5 0 0,1 20.5,12A1.5,1.5 0 0,1 22,13.5V15M14,15V17H8V13C8,11.89 8.9,11 10,11H12V9H8V7H12A2,2 0 0,1 14,9V11C14,12.11 13.1,13 12,13H10V15H14Z" /></svg>
<div class="a mono" style="left:1005px;top:1197.43px;font-size:24.2px;color:#F04F9E">response.length</div>
<div class="a " style="left:1333px;top:1190.63px;font-size:29.4px;color:#CAC5DA">5,837</div>
<div style="position:absolute;left:1529px;top:1189.02px;width:262px;height:39px;background:#7DC4FA;border-radius:8px"></div>
<div class="a " style="left:1543px;top:1196.69px;font-size:25.2px;color:#1F4C77">request.method:</div>
<div class="a " style="left:1730px;top:1198.30px;font-size:23.3px;color:#1F4C77;font-weight:700">GET</div>
<div class="a " style="left:680px;top:439.55px;font-size:27.7px;color:#CAC5DA;font-weight:700">Task</div>
<div class="a " style="left:964px;top:439.13px;font-size:28.2px;color:#CAC5DA;font-weight:700">Name</div>
<div class="a " style="left:1333px;top:438.71px;font-size:28.7px;color:#CAC5DA;font-weight:700">Value</div>
<div class="a " style="left:1528px;top:439.13px;font-size:28.2px;color:#CAC5DA;font-weight:700">Tags</div>
<svg style="position:absolute;left:756px;top:442px;" width="20" height="24" viewBox="0 0 20 24"><path d="M0 10L10 0L20 10Z" fill="#A59FC0"/><path d="M0 14L20 14L10 24Z" fill="#A59FC0"/></svg>
<svg style="position:absolute;left:1056px;top:442px;" width="20" height="24" viewBox="0 0 20 24"><path d="M0 10L10 0L20 10Z" fill="#7A17F6"/><path d="M0 14L20 14L10 24Z" fill="#A59FC0"/></svg>
<svg style="position:absolute;left:1422px;top:442px;" width="20" height="24" viewBox="0 0 20 24"><path d="M0 10L10 0L20 10Z" fill="#A59FC0"/><path d="M0 14L20 14L10 24Z" fill="#A59FC0"/></svg>
<div style="position:absolute;left:664px;top:1313px;width:210px;height:48px;background:#1C1E27;border:2px solid #404559;border-radius:8px"></div>
<div class="a " style="left:680px;top:1325.12px;font-size:24.9px;color:#CAC5DA">25 per page</div>
<svg style="position:absolute;left:830px;top:1325px;" width="30" height="24" viewBox="0 0 30 24"><path d="M5 7.5L14.3 17L23.8 7.5" fill="none" stroke="#A9A2CC" stroke-width="1.6"/></svg>
<div class="a " style="left:3239px;top:1321.01px;font-size:24.8px;color:#A6A1FF">Total: 7</div>
<div style="position:absolute;left:3454px;top:0px;width:2px;height:1832px;background:rgba(255,255,255,0.05)"></div>
</body></html>
